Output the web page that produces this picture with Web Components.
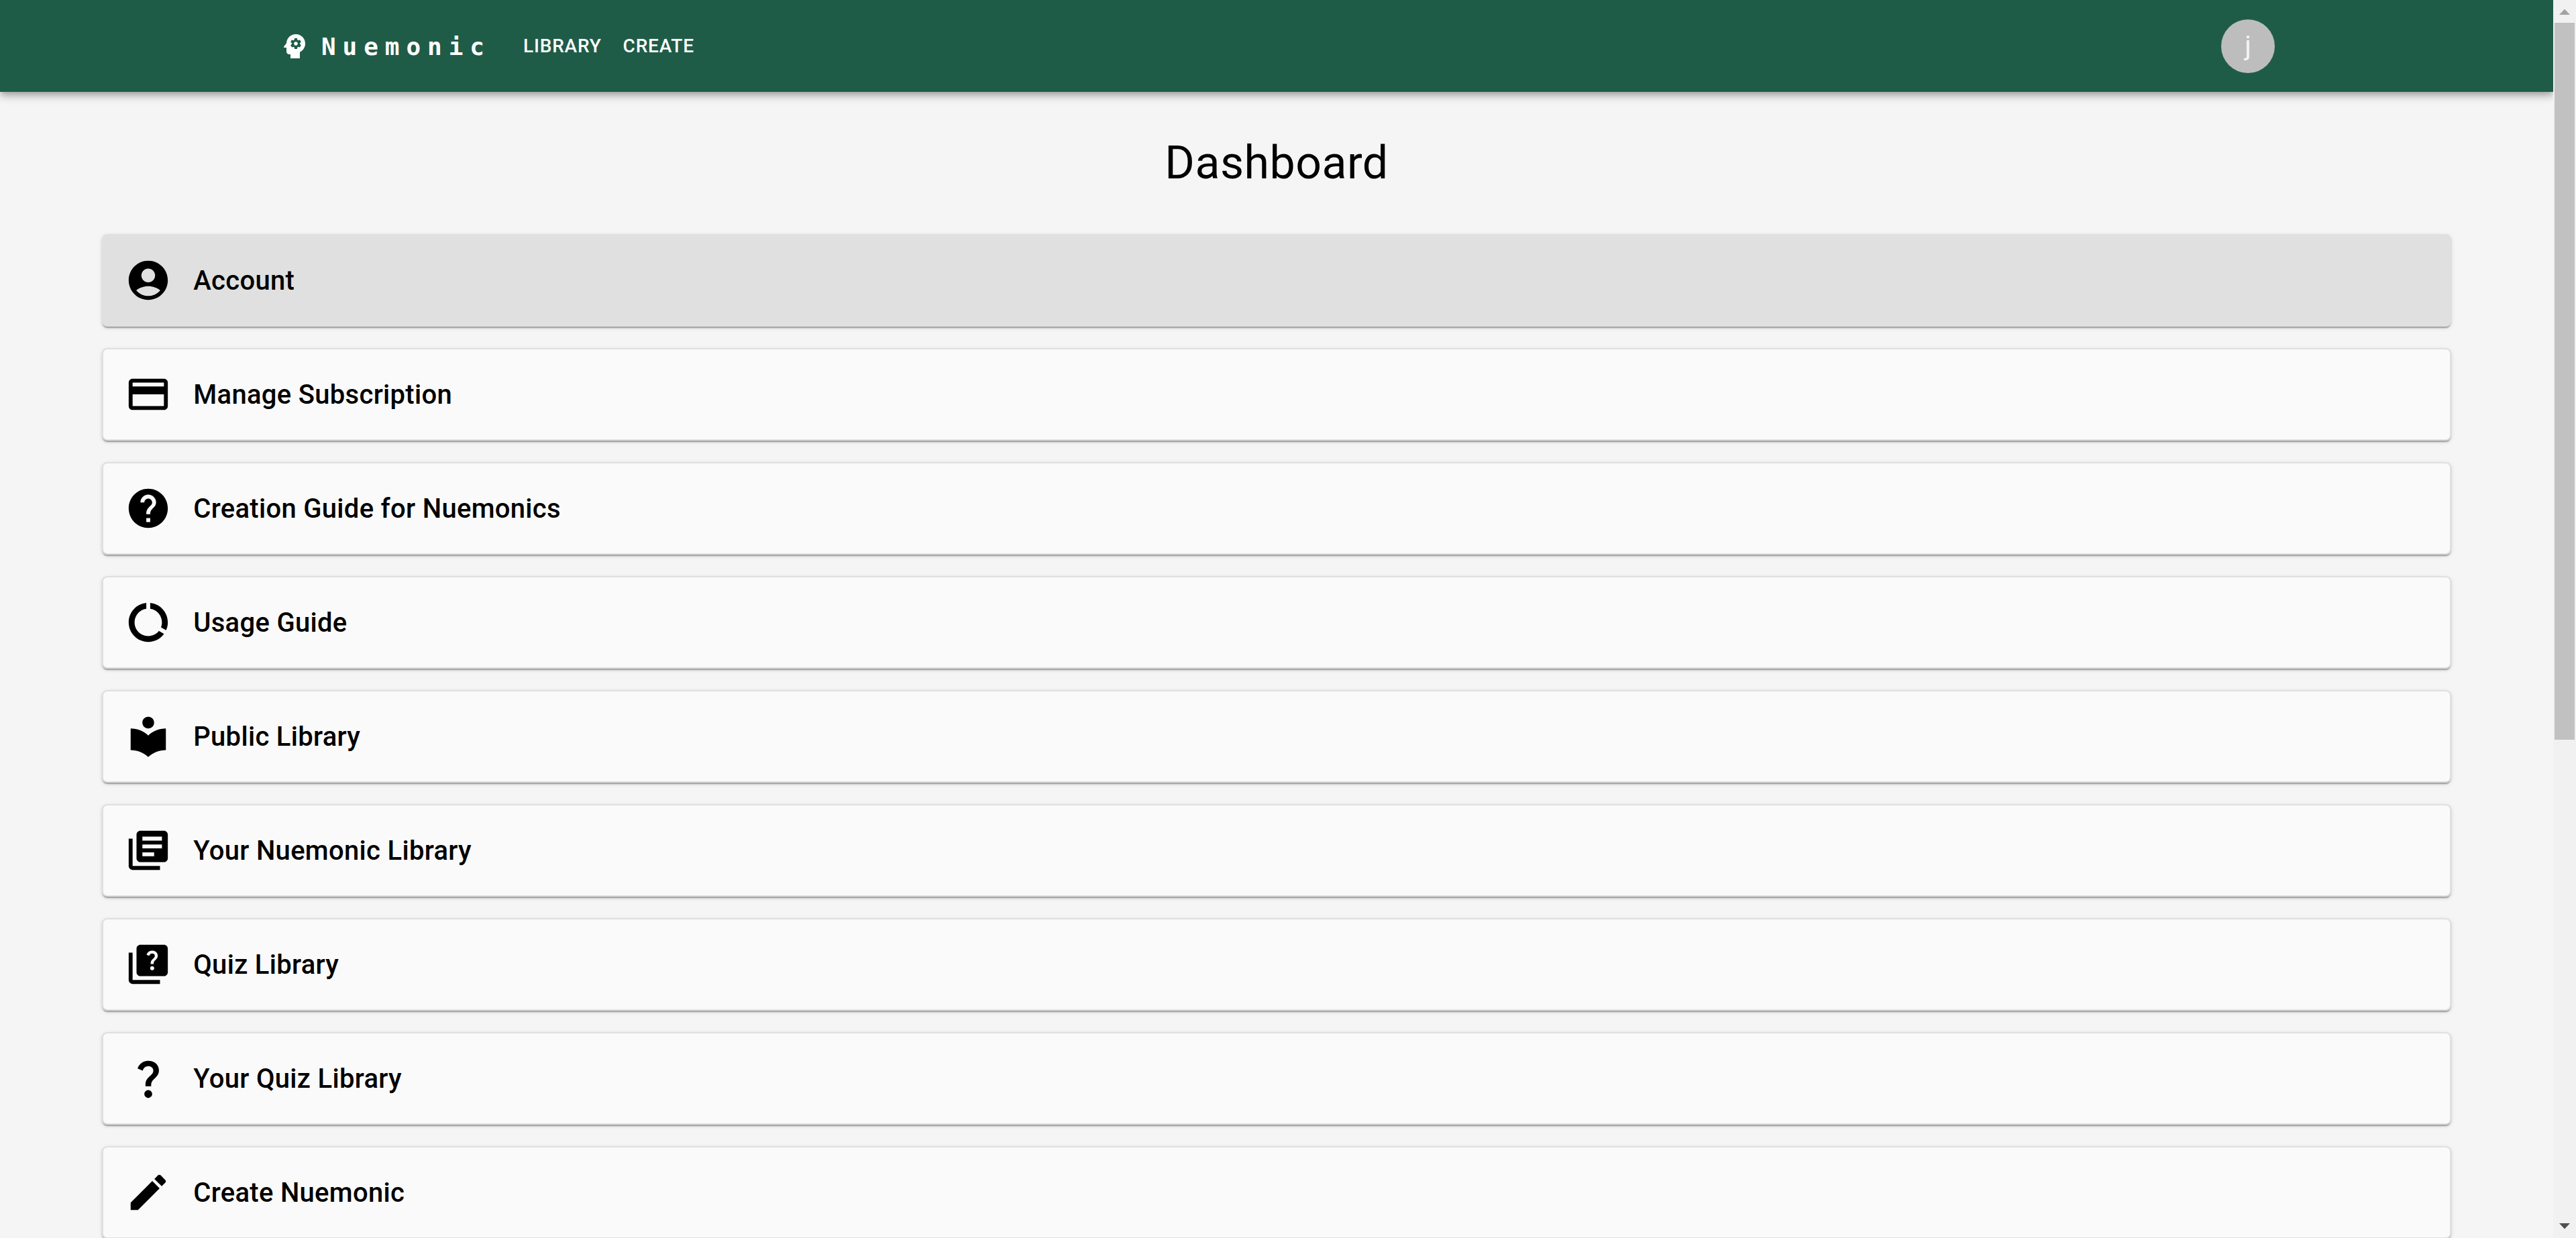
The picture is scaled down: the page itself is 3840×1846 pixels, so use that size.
<!DOCTYPE html>
<html lang="en">
<head>
    <meta charset="utf-8">
    <title>Nuemonic</title>
    <style>
        body {
            margin: 0;
            height: 1846px;
            overflow: hidden;
            color: #000;
            background: #f5f5f5;
            font-family: Roboto, "Liberation Sans", sans-serif;
        }
    </style>
</head>
<body>
<app-shell>
    <nav-bar slot="header" brand="Nuemonic" initial="j">
        <nav-link>Library</nav-link>
        <nav-link>Create</nav-link>
    </nav-bar>
    <dash-board heading="Dashboard">
        <dash-item icon="account" active>Account</dash-item>
        <dash-item icon="payment">Manage Subscription</dash-item>
        <dash-item icon="help">Creation Guide for Nuemonics</dash-item>
        <dash-item icon="usage">Usage Guide</dash-item>
        <dash-item icon="reader">Public Library</dash-item>
        <dash-item icon="books">Your Nuemonic Library</dash-item>
        <dash-item icon="quiz">Quiz Library</dash-item>
        <dash-item icon="question">Your Quiz Library</dash-item>
        <dash-item icon="edit">Create Nuemonic</dash-item>
    </dash-board>
</app-shell>

<script>
const icons = {
    mind: "M13 8.57c-.79 0-1.43.64-1.43 1.43s.64 1.43 1.43 1.43 1.43-.64 1.43-1.43-.64-1.43-1.43-1.43zM13 3C9.25 3 6.2 5.94 6.02 9.64L4.1 12.2c-.25.33-.01.8.4.8H6v3c0 1.1.9 2 2 2h1v3h7v-4.68c2.36-1.12 4-3.53 4-6.32 0-3.87-3.13-7-7-7zm3 7c0 .13-.01.26-.02.39l.83.66c.08.06.1.16.05.25l-.8 1.39c-.05.09-.16.12-.24.09l-.99-.4c-.21.16-.43.29-.67.39L14 13.83c-.01.1-.1.17-.2.17h-1.6c-.1 0-.18-.07-.2-.17l-.15-1.06c-.25-.1-.47-.23-.68-.39l-.99.4c-.09.03-.2 0-.25-.09l-.8-1.39c-.05-.08-.03-.19.05-.25l.84-.66c-.01-.13-.02-.26-.02-.39s.02-.27.04-.39l-.85-.66c-.08-.06-.1-.16-.05-.26l.8-1.38c.05-.09.15-.12.24-.09l1 .4c.2-.15.43-.29.67-.39L12 6.17c.02-.1.1-.17.2-.17h1.6c.1 0 .18.07.2.17l.15 1.06c.24.1.46.23.67.39l1-.4c.09-.03.2 0 .24.09l.8 1.38c.05.09.03.2-.05.26l-.85.66c.03.12.04.25.04.39z",
    account: "M12 2C6.48 2 2 6.48 2 12s4.48 10 10 10 10-4.48 10-10S17.52 2 12 2zm0 4c1.93 0 3.5 1.57 3.5 3.5S13.93 13 12 13s-3.5-1.57-3.5-3.5S10.07 6 12 6zm0 14c-2.03 0-4.43-.82-6.14-2.88C7.55 15.8 9.68 15 12 15s4.45.8 6.14 2.12C16.43 19.18 14.03 20 12 20z",
    payment: "M20 4H4c-1.11 0-1.99.89-1.99 2L2 18c0 1.11.89 2 2 2h16c1.11 0 2-.89 2-2V6c0-1.11-.89-2-2-2zm0 14H4v-6h16v6zm0-10H4V6h16v2z",
    help: "M12 2C6.48 2 2 6.48 2 12s4.48 10 10 10 10-4.48 10-10S17.52 2 12 2zm1 17h-2v-2h2v2zm2.07-7.75-.9.92C13.45 12.9 13 13.5 13 15h-2v-.5c0-1.1.45-2.1 1.17-2.83l1.24-1.26c.37-.36.59-.86.59-1.41 0-1.1-.9-2-2-2s-2 .9-2 2H8c0-2.21 1.79-4 4-4s4 1.79 4 4c0 .88-.36 1.68-.93 2.25z",
    usage: "M13 2.05v3.03c3.39.49 6 3.39 6 6.92 0 .9-.18 1.75-.48 2.54l2.6 1.53c.56-1.24.88-2.62.88-4.07 0-5.18-3.95-9.45-9-9.95zM12 19c-3.87 0-7-3.13-7-7 0-3.53 2.61-6.43 6-6.92V2.05c-5.06.5-9 4.76-9 9.95 0 5.52 4.47 10 9.99 10 3.31 0 6.24-1.61 8.06-4.09l-2.6-1.53C16.17 17.98 14.21 19 12 19z",
    reader: "M12 11.55C9.64 9.35 6.48 8 3 8v11c3.48 0 6.64 1.35 9 3.55 2.36-2.19 5.52-3.55 9-3.55V8c-3.48 0-6.64 1.35-9 3.55zM12 8c1.66 0 3-1.34 3-3s-1.34-3-3-3-3 1.34-3 3 1.34 3 3 3z",
    books: "M4 6H2v14c0 1.1.9 2 2 2h14v-2H4V6zm16-4H8c-1.1 0-2 .9-2 2v12c0 1.1.9 2 2 2h12c1.1 0 2-.9 2-2V4c0-1.1-.9-2-2-2zm-1 9H9V9h10v2zm-4 4H9v-2h6v2zm4-8H9V5h10v2z",
    quiz: "M4 6H2v14c0 1.1.9 2 2 2h14v-2H4V6zM20 2H8c-1.1 0-2 .9-2 2v12c0 1.1.9 2 2 2h12c1.1 0 2-.9 2-2V4c0-1.1-.9-2-2-2zm-5.99 13c-.59 0-1.05-.47-1.05-1.05 0-.59.47-1.04 1.05-1.04.59 0 1.04.45 1.04 1.04-.01.58-.45 1.05-1.04 1.05zm2.5-6.17c-.63.93-1.23 1.21-1.56 1.81-.13.24-.18.4-.18 1.18h-1.52c0-.41-.06-1.08.26-1.65.41-.73 1.18-1.16 1.63-1.8.48-.68.21-1.94-1.14-1.94-.88 0-1.32.67-1.5 1.23l-1.37-.57C11.51 5.96 12.52 5 13.99 5c1.23 0 2.08.56 2.51 1.26.37.61.58 1.73.01 2.57z",
    question: "M11.07 12.85c.77-1.39 2.25-2.21 3.11-3.44.91-1.29.4-3.7-2.18-3.7-1.69 0-2.52 1.28-2.87 2.34L6.54 6.96C7.25 4.83 9.18 3 11.99 3c2.35 0 3.96 1.07 4.78 2.41.7 1.15 1.11 3.3.03 4.9-1.2 1.77-2.35 2.31-2.97 3.45-.25.46-.35.76-.35 2.24h-2.89c-.01-.78-.13-2.05.48-3.15zM14 20c0 1.1-.9 2-2 2s-2-.9-2-2 .9-2 2-2 2 .9 2 2z",
    edit: "M3 17.25V21h3.75L17.81 9.94l-3.75-3.75L3 17.25zM20.71 7.04c.39-.39.39-1.02 0-1.41l-2.34-2.34c-.39-.39-1.02-.39-1.41 0l-1.83 1.83 3.75 3.75 1.83-1.83z"
}

function createTemplate(html) {
    const template = document.createElement("template")
    template.innerHTML = html
    return template
}

class SvgIcon extends HTMLElement {
    static template = createTemplate(`
        <style>
            :host {
                display: block;
                flex: none;
                width: var(--icon-size, 48px);
                height: var(--icon-size, 48px);
            }

            svg {
                display: block;
                width: 100%;
                height: 100%;
                fill: currentColor;
            }
        </style>
        <svg viewBox="0 0 24 24"><path /></svg>
    `)

    constructor() {
        super()
        const shadow = this.attachShadow({ mode: "open" })
        shadow.append(SvgIcon.template.content.cloneNode(true))
        this.path = shadow.querySelector("path")
    }

    static get observedAttributes() {
        return ["name"]
    }

    attributeChangedCallback(name, oldValue, newValue) {
        this.path.setAttribute("d", icons[newValue] || "")
    }
}

class AppShell extends HTMLElement {
    static template = createTemplate(`
        <style>
            :host {
                display: flex;
                height: 100%;
            }

            .page {
                flex: 1;
                min-width: 0;
                overflow: hidden;
            }
        </style>
        <div class="page">
            <slot name="header"></slot>
            <slot></slot>
        </div>
        <scroll-bar></scroll-bar>
    `)

    constructor() {
        super()
        this.attachShadow({ mode: "open" }).append(AppShell.template.content.cloneNode(true))
    }
}

class ScrollBar extends HTMLElement {
    static template = createTemplate(`
        <style>
            :host {
                display: flex;
                flex-direction: column;
                flex: none;
                box-sizing: border-box;
                width: 34px;
                padding: 0 2px;
                background: #f1f1f1;
            }

            .button {
                display: block;
                flex: none;
                width: 30px;
                height: 34px;
            }

            .track {
                flex: 1;
            }

            .thumb {
                height: 1069px;
                background: #c1c1c1;
            }
        </style>
        <svg class="button" viewBox="0 0 30 34"><path fill="#a3a3a3" d="M7 22l8-8.500 8 8.500z" /></svg>
        <div class="track"><div class="thumb"></div></div>
        <svg class="button" viewBox="0 0 30 34"><path fill="#505050" d="M7 12l8 8.500 8-8.500z" /></svg>
    `)

    constructor() {
        super()
        this.attachShadow({ mode: "open" }).append(ScrollBar.template.content.cloneNode(true))
    }
}

class NavBar extends HTMLElement {
    static template = createTemplate(`
        <style>
            :host {
                display: block;
                position: relative;
                color: #fff;
                background: #1f5c48;
                box-shadow: 0 4px 8px -2px rgba(0, 0, 0, .2),
                    0 8px 10px 0 rgba(0, 0, 0, .14),
                    0 2px 20px 0 rgba(0, 0, 0, .12);
            }

            .toolbar {
                display: flex;
                align-items: center;
                box-sizing: border-box;
                width: 100%;
                max-width: 3072px;
                height: 137px;
                margin: 0 auto;
                padding: 0 48px;
            }

            .brand {
                width: 253px;
                margin: 0 32px 0 16px;
                padding-top: 2px;
                font: 700 36px/64px "DejaVu Sans Mono", monospace;
                letter-spacing: 9.95px;
                white-space: nowrap;
            }

            nav {
                display: flex;
                flex: 1;
            }

            .avatar {
                display: flex;
                align-items: center;
                justify-content: center;
                width: 80px;
                height: 80px;
                border-radius: 50%;
                color: #f5f5f5;
                background: #bdbdbd;
                font-size: 40px;
                line-height: 1;
            }
        </style>
        <div class="toolbar">
            <svg-icon name="mind"></svg-icon>
            <div class="brand"></div>
            <nav><slot></slot></nav>
            <div class="avatar"></div>
        </div>
    `)

    constructor() {
        super()
        this.attachShadow({ mode: "open" }).append(NavBar.template.content.cloneNode(true))
    }

    connectedCallback() {
        this.shadowRoot.querySelector(".brand").textContent = this.getAttribute("brand")
        this.shadowRoot.querySelector(".avatar").textContent = this.getAttribute("initial")
    }
}

class NavLink extends HTMLElement {
    static template = createTemplate(`
        <style>
            :host {
                display: block;
                padding: 12px 16px;
                font-size: 28px;
                font-weight: 500;
                line-height: 49px;
                letter-spacing: .8px;
                text-transform: uppercase;
            }
        </style>
        <slot></slot>
    `)

    constructor() {
        super()
        this.attachShadow({ mode: "open" }).append(NavLink.template.content.cloneNode(true))
    }
}

class DashBoard extends HTMLElement {
    static template = createTemplate(`
        <style>
            :host {
                display: block;
                padding-top: 64px;
            }

            h1 {
                margin: 0 0 64px;
                font-size: 68px;
                font-weight: 400;
                line-height: 84px;
                letter-spacing: .5px;
                text-align: center;
            }

            .list {
                display: flex;
                flex-direction: column;
                gap: 32px;
                width: 92%;
                margin: 0 auto;
            }
        </style>
        <h1></h1>
        <div class="list"><slot></slot></div>
    `)

    constructor() {
        super()
        this.attachShadow({ mode: "open" }).append(DashBoard.template.content.cloneNode(true))
    }

    connectedCallback() {
        this.shadowRoot.querySelector("h1").textContent = this.getAttribute("heading")
    }
}

class DashItem extends HTMLElement {
    static template = createTemplate(`
        <style>
            :host {
                --icon-size: 70px;
                display: flex;
                align-items: center;
                gap: 32px;
                padding: 32px;
                border: 2px solid #e0e0e0;
                border-radius: 8px;
                background: #fafafa;
                box-shadow: 0 4px 2px -2px rgba(0, 0, 0, .2),
                    0 2px 2px 0 rgba(0, 0, 0, .14),
                    0 2px 6px 0 rgba(0, 0, 0, .12);
                font-size: 40px;
                font-weight: 500;
                line-height: 64px;
                letter-spacing: .3px;
            }

            :host([active]) {
                background: #e0e0e0;
            }

            span {
                padding-top: 2px;
            }
        </style>
        <svg-icon></svg-icon>
        <span><slot></slot></span>
    `)

    constructor() {
        super()
        this.attachShadow({ mode: "open" }).append(DashItem.template.content.cloneNode(true))
    }

    connectedCallback() {
        this.shadowRoot.querySelector("svg-icon").setAttribute("name", this.getAttribute("icon"))
    }
}

customElements.define("svg-icon", SvgIcon)
customElements.define("scroll-bar", ScrollBar)
customElements.define("app-shell", AppShell)
customElements.define("nav-link", NavLink)
customElements.define("nav-bar", NavBar)
customElements.define("dash-item", DashItem)
customElements.define("dash-board", DashBoard)
</script>
</body>
</html>
